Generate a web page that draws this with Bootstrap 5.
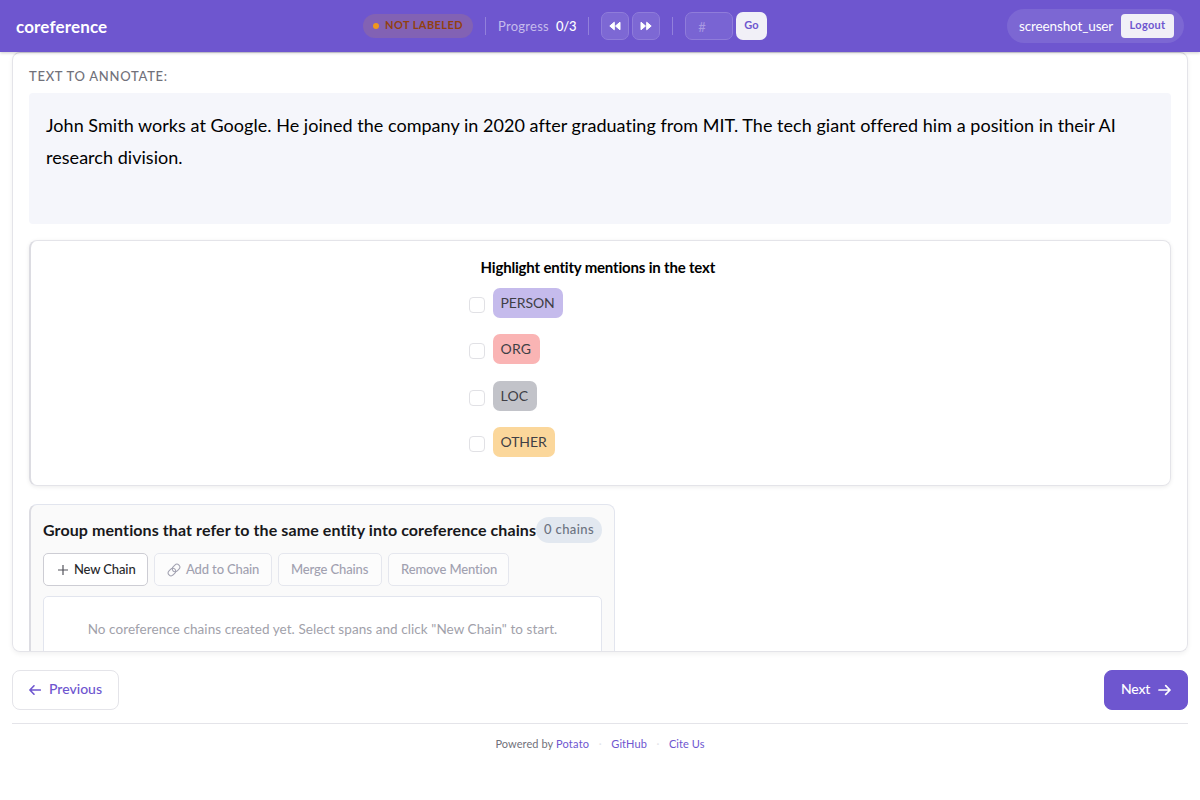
<!DOCTYPE html>
<html lang="en">
<head>
<meta charset="utf-8">
<meta name="viewport" content="width=device-width, initial-scale=1">
<title>coreference</title>
<link href="https://cdn.jsdelivr.net/npm/bootstrap@5.3.0/dist/css/bootstrap.min.css" rel="stylesheet">
<script src="https://cdn.jsdelivr.net/npm/bootstrap@5.3.0/dist/js/bootstrap.bundle.min.js" defer></script>
<style>
:root{--brand:#6e56cf;--line:#e4e4e9}
body{font-family:Lato,"Liberation Sans",sans-serif;background:#fff;color:#09090b;height:800px;overflow:hidden;font-variant-ligatures:none}
button,span,a{white-space:nowrap}
svg{display:block;flex-shrink:0}
.topbar{height:52px;background:var(--brand);color:#fff;box-shadow:0 1px 3px rgba(0,0,0,.2);position:relative;z-index:2;display:grid;grid-template-columns:347px 404px 1fr;padding:0 16px}
.brand-name{font-size:17px;font-weight:700;padding-top:2px;letter-spacing:.15px}
.status{height:24px;width:110px;padding-left:10px;border-radius:12px;background:#8262b4;color:#92400e;font-size:11px;font-weight:700;letter-spacing:.42px;margin-right:12px}
.status span{line-height:24px;margin-top:-2px}
.status i{width:6px;height:6px;border-radius:50%;background:#f0981a;margin-right:6px}
.vline{width:1px;height:18px;background:rgba(255,255,255,.25);margin-right:12px}
.prog{font-size:13px;letter-spacing:.27px;color:#c5bbec;margin-top:1px}
.prog-n{font-size:13px;font-weight:500;letter-spacing:-.2px;margin:1px 12px 0 7px}
.tool{width:28px;height:28px;border:1px solid #8f7cda;border-radius:7px;background:#7d68d4;color:#fff;padding:0}
.goto{width:48px;height:28px;border:1px solid #8f7cda;border-radius:7px;background:#7964d3;color:#a899e2;font-size:13px;line-height:28px;padding-left:12px;margin-right:3px}
.white-btn{background:#f1f0f7;color:var(--brand);border:0;font-size:11px;font-weight:700;padding:0 0 3px;line-height:1}
.go{width:31px;height:28px;border-radius:7px;letter-spacing:.3px}
.logout{width:53px;height:24px;border-radius:4px;letter-spacing:.3px}
.user{height:34px;width:177px;border-radius:17px;background:#7c67d3;padding:0 10px 0 12px;font-size:13.5px;letter-spacing:-.13px}
.panel{height:600px;margin:0 12px;border:1px solid var(--line);border-top-color:#d9d8e2;border-radius:8px;box-shadow:0 2px 5px rgba(0,0,0,.06);overflow:hidden;padding:14px 16px 0}
.section-label{font-size:13px;font-weight:500;letter-spacing:.72px;color:#71717a;line-height:19px;margin-bottom:7px}
.source{height:131px;background:#f5f6fb;border-radius:4px;padding:16px 0 0 17px;font-size:18px;line-height:32px;color:#000;letter-spacing:.035px}
.form-box{border:1px solid var(--line);border-left:2px solid #dcdce2;border-radius:8px}
.spans{height:246px;margin-top:16px;box-shadow:0 1px 4px rgba(0,0,0,.08);padding-top:15px}
.spans-in{width:264px;margin:0 auto}
.spans h6{font-size:15px;font-weight:700;line-height:22px;margin:0 0 10px 12px;color:#000;letter-spacing:-.18px}
.opt{height:30px;margin-bottom:16.4px;gap:8px}
.opt .box{width:16px;height:16px;border:1px solid #e1e1e5;border-radius:4px;margin-top:9px;background:#fff}
.tag{height:30px;border-radius:7px;padding-left:8px;font-size:14px;line-height:30px;color:#3f3f46}
.t-person{width:70px;background:#c5bbec;letter-spacing:-.1px}
.t-org{width:47px;background:#fab4b4;letter-spacing:.2px}
.t-loc{width:44px;background:#c2c3c9;letter-spacing:.2px}
.t-other{width:62px;background:#fbd79b;letter-spacing:-.1px}
.chains{width:586px;height:220px;margin-top:18px;background:#fafafa;border-color:#e2e5ee;border-left-color:#dcdce2;padding:12px}
.chains h5{font-size:16px;font-weight:700;color:#18181b;margin:0;line-height:26px;width:493px;white-space:nowrap;letter-spacing:.09px}
.count{width:66px;height:26px;line-height:25px;border-radius:13px;background:#e2e8f0;color:#6b7280;font-size:13px;font-weight:500;letter-spacing:.4px;text-align:center}
.acts{gap:6px;margin-top:10px}
.act{height:33px;border:1px solid #e5e7ee;border-radius:5px;background:#fcfcfc;color:#a1a1b0;font-size:13px;font-weight:500;padding:0 0 0 12px;letter-spacing:-.13px;display:flex;align-items:center}
.act.on{background:#fff;border-color:#cdcdd4;color:#27272a}
.empty{height:140px;margin-top:10px;background:#fff;border:1px solid #e2e5ee;border-radius:5px;font-size:13.5px;color:#a1a1aa;padding-top:22px;letter-spacing:.07px}
.navbtn{height:40px;border:1px solid var(--line);border-radius:8px;font-size:14px;font-weight:500;color:var(--brand);background:#fff;padding:0 16px;display:flex;align-items:center}
.navbtn span{margin-top:-3px}
.navbtn.next{width:84px;background:var(--brand);border-color:var(--brand);color:#fff;letter-spacing:-.2px}
.foot{margin:13px 12px 0;border-top:1px solid var(--line);font-size:11px;color:#71717a;padding-top:12px;line-height:16px;letter-spacing:.07px}
.foot a{color:var(--brand);text-decoration:none}
.foot .dot{width:22px;color:#e4e4e9;text-align:center}
</style>
</head>
<body>
<header class="topbar align-items-center">
<div class="brand-name">coreference</div>
<div class="d-flex align-items-center">
<div class="status d-flex align-items-center flex-shrink-0"><i></i><span>NOT LABELED</span></div>
<span class="vline"></span><span class="prog">Progress</span><span class="prog-n">0/3</span>
<span class="vline"></span>
<button class="tool d-flex align-items-center justify-content-center" aria-label="Back"><svg width="12" height="10" viewBox="0 0 12 10" fill="#fff" stroke="#fff" stroke-linejoin="round"><path d="M5.300 1.200v7.600L.8 5zM11 1.200v7.600L6.500 5z"/></svg></button>
<button class="tool d-flex align-items-center justify-content-center me-2" style="margin-left:3px" aria-label="Forward"><svg width="12" height="10" viewBox="0 0 12 10" fill="#fff" stroke="#fff" stroke-linejoin="round"><path d="M1 1.200v7.600L5.500 5zM6.700 1.200v7.600L11.200 5z"/></svg></button>
<span class="vline ms-1"></span><div class="goto">#</div><button class="white-btn go">Go</button>
</div>
<div class="d-flex justify-content-end"><div class="user d-flex align-items-center justify-content-between"><span>screenshot_user</span><button class="white-btn logout">Logout</button></div></div>
</header>
<main class="panel">
<div class="section-label">TEXT TO ANNOTATE:</div>
<div class="source">John Smith works at Google. He joined the company in 2020 after graduating from MIT. The tech giant offered him a position in their AI<br>research division.</div>
<section class="form-box spans"><div class="spans-in"><h6>Highlight entity mentions in the text</h6>
<div class="opt d-flex"><span class="box"></span><span class="tag t-person">PERSON</span></div>
<div class="opt d-flex"><span class="box"></span><span class="tag t-org">ORG</span></div>
<div class="opt d-flex"><span class="box"></span><span class="tag t-loc">LOC</span></div>
<div class="opt d-flex"><span class="box"></span><span class="tag t-other">OTHER</span></div>
</div></section>
<section class="form-box chains">
<div class="d-flex"><h5>Group mentions that refer to the same entity into coreference chains</h5><span class="count">0 chains</span></div>
<div class="acts d-flex">
<button class="act on" style="width:105px"><svg class="me-1" width="14" height="14" viewBox="0 0 14 14" fill="none" stroke="#52525b" stroke-width="1.2"><path d="M7 2v10M2 7h10"/></svg>New Chain</button>
<button class="act" style="width:118px"><svg width="14" height="14" viewBox="0 0 24 24" fill="none" stroke="#a1a1b0" stroke-width="1.8" stroke-linecap="round" stroke-linejoin="round" style="margin-right:5px"><path d="M10 13a5 5 0 0 0 7.54.54l3-3a5 5 0 0 0-7.07-7.07l-3 3a5 5 0 0 0-.9 5.600"/><path d="M14 11a5 5 0 0 0-7.54-.54l-3 3a5 5 0 0 0 7.070 7.070l3-3a5 5 0 0 0 .9-5.600"/></svg>Add to Chain</button>
<button class="act" style="width:104px">Merge Chains</button>
<button class="act" style="width:121px">Remove Mention</button>
</div>
<div class="empty text-center">No coreference chains created yet. Select spans and click "New Chain" to start.</div></section>
</main>
<div class="d-flex justify-content-between" style="margin:18px 12px 0">
<button class="navbtn"><svg width="12" height="12" viewBox="0 0 12 12" fill="none" stroke="#6e56cf" stroke-width="1.6" stroke-linecap="round" stroke-linejoin="round" class="me-2"><path d="M11.300 6H1M5 1.800.9 6 5 10.200"/></svg><span>Previous</span></button>
<button class="navbtn next"><span>Next</span><svg width="13" height="12" viewBox="0 0 13 12" fill="none" stroke="#fff" stroke-width="1.7" stroke-linecap="round" stroke-linejoin="round" class="ms-2"><path d="M1 6h11M7.700 1.600 12 6l-4.300 4.400"/></svg></button></div>
<footer class="foot d-flex justify-content-center"><span>Powered by <a href="#" style="letter-spacing:.25px">Potato</a></span><span class="dot">·</span><a href="#">GitHub</a><span class="dot">·</span><a href="#">Cite Us</a></footer>
</body>
</html>
